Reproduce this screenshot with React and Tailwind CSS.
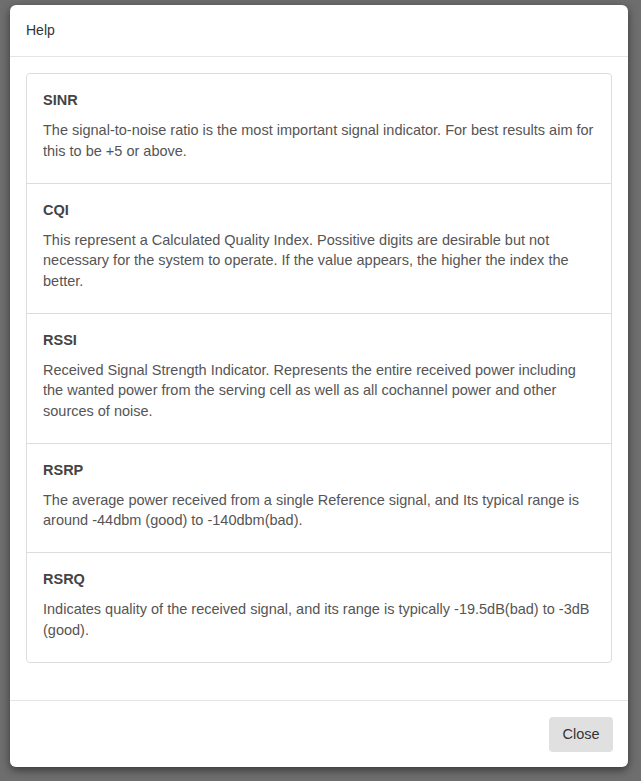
import React from "react";

const items = [
  {
    t: "SINR",
    d: "The signal-to-noise ratio is the most important signal indicator. For best results aim for this to be +5 or above.",
  },
  {
    t: "CQI",
    d: "This represent a Calculated Quality Index. Possitive digits are desirable but not necessary for the system to operate. If the value appears, the higher the index the better.",
  },
  {
    t: "RSSI",
    d: "Received Signal Strength Indicator. Represents the entire received power including the wanted power from the serving cell as well as all cochannel power and other sources of noise.",
  },
  {
    t: "RSRP",
    d: "The average power received from a single Reference signal, and Its typical range is around -44dbm (good) to -140dbm(bad).",
  },
  {
    t: "RSRQ",
    d: "Indicates quality of the received signal, and its range is typically -19.5dB(bad) to -3dB (good).",
  },
];

export default function App() {
  return (
    <div
      className="w-[641px] h-[781px] bg-[#6e6e6e] pt-[5px] pl-[10px] overflow-hidden"
      style={{ fontFamily: '"Liberation Sans", Arial, sans-serif' }}
    >
      <div className="w-[618px] h-[762px] bg-white rounded-[6px] shadow-[0_3px_9px_rgba(0,0,0,0.5)] flex flex-col text-[14px] leading-[21px]">
        <div className="px-4 pt-[15px] pb-[15px] border-b border-[#e5e5e5] text-[#333]">
          Help
        </div>
        <div className="px-4 pt-4 pb-[37px]">
          <div className="border border-[#dddddd] rounded-[4px]">
            {items.map((it, i) => (
              <div
                key={it.t}
                className={
                  "pl-4 pr-3 pt-4 pb-[21.5px]" +
                  (i > 0 ? " border-t border-[#dddddd]" : "")
                }
              >
                <div className="font-bold text-[#444] text-[14.5px] leading-[21px] mb-[9px]">
                  {it.t}
                </div>
                <div className="text-[#555] text-[14.5px] leading-[20.5px]">
                  {it.d}
                </div>
              </div>
            ))}
          </div>
        </div>
        <div className="border-t border-[#e5e5e5] flex justify-end px-[15px] pt-4">
          <button className="w-[64px] h-[35px] bg-[#e0e0e0] rounded-[4px] text-[#333] text-[14.5px]">
            Close
          </button>
        </div>
      </div>
    </div>
  );
}
